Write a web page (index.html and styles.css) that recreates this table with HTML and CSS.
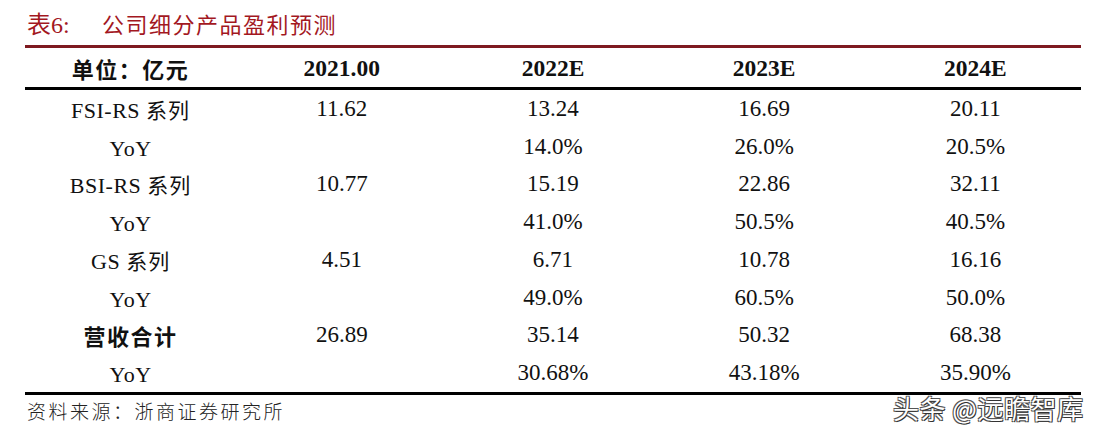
FILE: index.html
```html
<!DOCTYPE html>
<html lang="zh-CN">
<head>
<meta charset="utf-8">
<title>公司细分产品盈利预测</title>
<link rel="stylesheet" href="styles.css">
</head>
<body>
<div class="page">
  <div class="title"><span class="tno">表6:</span><span class="tname">公司细分产品盈利预测</span></div>
  <div class="tbl">
    <div class="row head">
      <div class="cjkb">单位：亿元</div>
      <div class="numb">2021.00</div>
      <div class="numb">2022E</div>
      <div class="numb">2023E</div>
      <div class="numb">2024E</div>
    </div>
    <div class="row">
      <div class="lab"><span class="lat">FSI-RS </span>系列</div>
      <div>11.62</div><div>13.24</div><div>16.69</div><div>20.11</div>
    </div>
    <div class="row">
      <div class="lab"><span class="lat">YoY</span></div>
      <div></div><div>14.0%</div><div>26.0%</div><div>20.5%</div>
    </div>
    <div class="row">
      <div class="lab"><span class="lat">BSI-RS </span>系列</div>
      <div>10.77</div><div>15.19</div><div>22.86</div><div>32.11</div>
    </div>
    <div class="row">
      <div class="lab"><span class="lat">YoY</span></div>
      <div></div><div>41.0%</div><div>50.5%</div><div>40.5%</div>
    </div>
    <div class="row">
      <div class="lab"><span class="lat">GS </span>系列</div>
      <div>4.51</div><div>6.71</div><div>10.78</div><div>16.16</div>
    </div>
    <div class="row">
      <div class="lab"><span class="lat">YoY</span></div>
      <div></div><div>49.0%</div><div>60.5%</div><div>50.0%</div>
    </div>
    <div class="row">
      <div class="cjkb">营收合计</div>
      <div>26.89</div><div>35.14</div><div>50.32</div><div>68.38</div>
    </div>
    <div class="row">
      <div class="lab"><span class="lat">YoY</span></div>
      <div></div><div>30.68%</div><div>43.18%</div><div>35.90%</div>
    </div>
  </div>
  <div class="source">资料来源：浙商证券研究所</div>
  <div class="wm">头条 @远瞻智库</div>
</div>
</body>
</html>
```
FILE: styles.css
```css
html, body {
  margin: 0;
  padding: 0;
  background: #ffffff;
}
.page {
  position: relative;
  width: 1056px;
  padding: 6px 0 0 25px;
  height: 429px;
  font-family: "Liberation Serif", "Noto Sans CJK SC", serif;
  color: #111;
}
.title {
  height: 34px;
  line-height: 34px;
  margin-bottom: 5px;
  color: #a3181f;
  font-size: 24px;
  white-space: nowrap;
}
.tno {
  display: inline-block;
  width: 75px;
  padding-left: 2px;
  font-family: "Liberation Serif", "Noto Sans CJK SC", serif;
}
.tname {
  font-family: "Noto Sans CJK SC", sans-serif;
  font-weight: 400;
  font-size: 22px;
  letter-spacing: 1.5px;
}
.tbl {
  width: 1056px;
  border-top: 3px solid #7e1a20;
  border-bottom: 3px solid #000;
}
.row {
  display: grid;
  grid-template-columns: repeat(5, 1fr);
  align-items: center;
  text-align: center;
  height: 37.75px;
  font-size: 23px;
  white-space: nowrap;
}
.row.head {
  height: 39px;
  border-bottom: 3px solid #000;
}
.numb {
  font-weight: 700;
  font-size: 23.5px;
  padding-top: 2px;
}
.cjkb {
  font-family: "Noto Sans CJK SC", sans-serif;
  font-weight: 700;
  font-size: 22px;
  letter-spacing: 1.5px;
}
.head .cjkb {
  padding-top: 1px;
}
.lab {
  font-family: "Noto Sans CJK SC", sans-serif;
  font-weight: 400;
  font-size: 21px;
  letter-spacing: 1px;
}
.lat {
  font-family: "Liberation Serif", serif;
  font-size: 22px;
  letter-spacing: 0.5px;
}
.source {
  height: 32px;
  line-height: 32px;
  padding-left: 2px;
  font-family: "Noto Sans CJK SC", sans-serif;
  font-weight: 300;
  font-size: 19px;
  letter-spacing: 2.5px;
  color: #222;
}
.wm {
  position: absolute;
  left: 893px;
  top: 392px;
  line-height: 32px;
  font-family: "Noto Sans CJK SC", sans-serif;
  font-size: 26px;
  letter-spacing: 0.5px;
  color: #ffffff;
  text-shadow: 1px 1px 0 #333, -1px -1px 0 #555, 1px -1px 0 #555, -1px 1px 0 #555;
  white-space: nowrap;
}
```
